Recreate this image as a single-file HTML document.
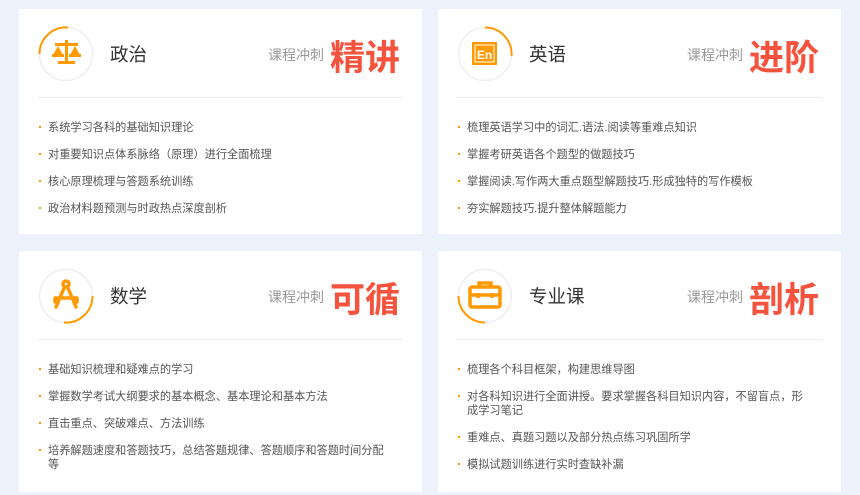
<!DOCTYPE html>
<html><head><meta charset="utf-8"><style>
*{margin:0;padding:0;box-sizing:border-box}
body{width:860px;height:495px;background:#edf1fb;position:relative;overflow:hidden;font-family:"Liberation Sans","Noto Sans CJK SC",sans-serif}
.card{position:absolute;background:#fff;width:403px}
.ic{position:absolute;left:19px;top:17px;width:56px;height:56px}
.t{position:absolute;left:91px;top:32px;font-size:18.5px;color:#333}
.k{position:absolute;left:249px;top:36px;font-size:14px;color:#999}
.b{position:absolute;left:311px;top:21px;font-size:35px;font-weight:bold;color:#f5533d}
.hr{position:absolute;left:19px;right:19px;top:88px;height:1px;background:#eee}
ul{position:absolute;left:20px;top:112px;list-style:none;width:352px}
li{position:relative;padding-left:9px;font-size:11.2px;color:#555;line-height:14px;margin-bottom:13px}
li:before{content:"";position:absolute;left:0;top:5px;width:2px;height:2px;background:#f90}
</style></head><body>

<div class="card" style="left:19px;top:9px;height:225px">
 <svg class="ic" viewBox="0 0 56 56"><circle cx="28" cy="28" r="26.5" fill="none" stroke="#eee" stroke-width="1.5"/><path d="M1.5 28A26.5 26.5 0 0 1 30 1.5" fill="none" stroke="#f90" stroke-width="2"/>
 <g fill="#f90"><rect x="27" y="14" width="3" height="22"/><rect x="17" y="17" width="23" height="3"/><rect x="20" y="35" width="17" height="3"/><path d="M15 29l5-9 5 9z M32 29l5-9 5 9z"/><rect x="14" y="28" width="12" height="3"/><rect x="31" y="28" width="12" height="3"/></g></svg>
 <div class="t">政治</div><div class="k">课程冲刺</div><div class="b">精讲</div><div class="hr"></div>
 <ul><li>系统学习各科的基础知识理论</li><li>对重要知识点体系脉络（原理）进行全面梳理</li><li>核心原理梳理与答题系统训练</li><li>政治材料题预测与时政热点深度剖析</li></ul>
</div>

<div class="card" style="left:438px;top:9px;height:225px">
 <svg class="ic" viewBox="0 0 56 56"><circle cx="28" cy="28" r="26.5" fill="none" stroke="#eee" stroke-width="1.5"/><path d="M28 1.5A26.5 26.5 0 0 1 54.5 30" fill="none" stroke="#f90" stroke-width="2"/>
 <rect x="15" y="16" width="25" height="23" fill="#f90"/><rect x="18" y="19" width="19" height="17" fill="none" stroke="#fff" stroke-width="1"/><text x="27.5" y="33" text-anchor="middle" font-size="12" font-weight="bold" fill="#fff" font-family="Liberation Sans,sans-serif">En</text></svg>
 <div class="t">英语</div><div class="k">课程冲刺</div><div class="b">进阶</div><div class="hr"></div>
 <ul><li>梳理英语学习中的词汇.语法.阅读等重难点知识</li><li>掌握考研英语各个题型的做题技巧</li><li>掌握阅读.写作两大重点题型解题技巧.形成独特的写作模板</li><li>夯实解题技巧.提升整体解题能力</li></ul>
</div>

<div class="card" style="left:19px;top:251px;height:241px">
 <svg class="ic" viewBox="0 0 56 56"><circle cx="28" cy="28" r="26.5" fill="none" stroke="#eee" stroke-width="1.5"/><path d="M54.5 28A26.5 26.5 0 0 1 26 54.5" fill="none" stroke="#f90" stroke-width="2"/>
 <g fill="none" stroke="#f90" stroke-width="3.5" stroke-linecap="round"><circle cx="28" cy="16" r="3"/><path d="M26.5 19L18 39M29.5 19L38 39M17 30H39M17 30v4M39 30v4"/></g></svg>
 <div class="t">数学</div><div class="k">课程冲刺</div><div class="b">可循</div><div class="hr"></div>
 <ul><li>基础知识梳理和疑难点的学习</li><li>掌握数学考试大纲要求的基本概念、基本理论和基本方法</li><li>直击重点、突破难点、方法训练</li><li>培养解题速度和答题技巧，总结答题规律、答题顺序和答题时间分配等</li></ul>
</div>

<div class="card" style="left:438px;top:251px;height:241px">
 <svg class="ic" viewBox="0 0 56 56"><circle cx="28" cy="28" r="26.5" fill="none" stroke="#eee" stroke-width="1.5"/><path d="M1.5 28A26.5 26.5 0 0 0 28 54.5" fill="none" stroke="#f90" stroke-width="2"/>
 <g fill="none" stroke="#f90" stroke-width="3.5"><rect x="13" y="19" width="30" height="20" rx="2"/><path d="M22 19v-4h12v4M13 27h30M21 25v5M35 25v5"/></g></svg>
 <div class="t">专业课</div><div class="k">课程冲刺</div><div class="b">剖析</div><div class="hr"></div>
 <ul><li>梳理各个科目框架，构建思维导图</li><li>对各科知识进行全面讲授。要求掌握各科目知识内容，不留盲点，形成学习笔记</li><li>重难点、真题习题以及部分热点练习巩固所学</li><li>模拟试题训练进行实时查缺补漏</li></ul>
</div>
</body></html>
